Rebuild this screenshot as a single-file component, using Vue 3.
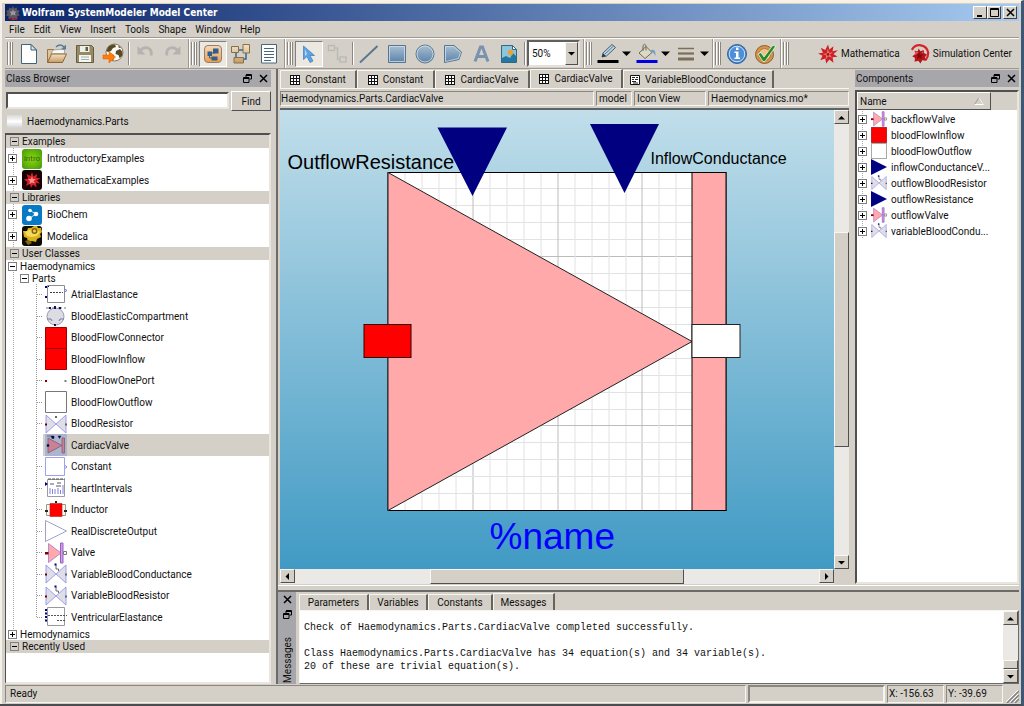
<script setup>
import { ref } from 'vue'

const menus = ['File', 'Edit', 'View', 'Insert', 'Tools', 'Shape', 'Window', 'Help']
const search = ref('')
const zoomLevel = ref('50%')

const examples = [
  { name: 'IntroductoryExamples', icon: 'intro' },
  { name: 'MathematicaExamples', icon: 'mathex' },
]
const libraries = [
  { name: 'BioChem', icon: 'biochem' },
  { name: 'Modelica', icon: 'modelica' },
]
const parts = [
  { name: 'AtrialElastance', icon: 'elastance' },
  { name: 'BloodElasticCompartment', icon: 'compartment' },
  { name: 'BloodFlowConnector', icon: 'redbox' },
  { name: 'BloodFlowInflow', icon: 'redbox' },
  { name: 'BloodFlowOnePort', icon: 'oneport' },
  { name: 'BloodFlowOutflow', icon: 'whitebox' },
  { name: 'BloodResistor', icon: 'resistor' },
  { name: 'CardiacValve', icon: 'cardiac', selected: true },
  { name: 'Constant', icon: 'constant' },
  { name: 'heartIntervals', icon: 'intervals' },
  { name: 'Inductor', icon: 'inductor' },
  { name: 'RealDiscreteOutput', icon: 'output' },
  { name: 'Valve', icon: 'valve' },
  { name: 'VariableBloodConductance', icon: 'varresistor' },
  { name: 'VariableBloodResistor', icon: 'varresistor' },
  { name: 'VentricularElastance', icon: 'ventricular' },
]
const docTabs = [
  { name: 'Constant', icon: 'grid', cls: 'w76' },
  { name: 'Constant', icon: 'grid', cls: 'w78' },
  { name: 'CardiacValve', icon: 'grid', cls: 'w95' },
  { name: 'CardiacValve', icon: 'grid', cls: 'w92', active: true },
  { name: 'VariableBloodConductance', icon: 'doc', cls: 'w150' },
]
const components = [
  { name: 'backflowValve', icon: 'valve' },
  { name: 'bloodFlowInflow', icon: 'redbox' },
  { name: 'bloodFlowOutflow', icon: 'whitebox' },
  { name: 'inflowConductanceV...', icon: 'input' },
  { name: 'outflowBloodResistor', icon: 'varresistor' },
  { name: 'outflowResistance', icon: 'input' },
  { name: 'outflowValve', icon: 'valve' },
  { name: 'variableBloodCondu...', icon: 'varresistor' },
]
const fileTools = ['new', 'open', 'save', 'web']
const editTools = ['undo', 'redo']
const shapeTools = ['line', 'rect', 'ellipse', 'polygon', 'text', 'image']
const gridLines = Array.from({ length: 19 }, (_, i) => i + 1)
const at = (start, i) => Math.round(start + i * 16.93)
</script>

<template>
  <div class="window">
    <svg class="defs" aria-hidden="true">
      <defs>
        <linearGradient id="blue" x1="0" y1="0" x2="0" y2="1"><stop offset="0" stop-color="#a9bfd3" /><stop offset="1" stop-color="#5b82a8" /></linearGradient>
        <linearGradient id="orange" x1="0" y1="0" x2="0" y2="1"><stop offset="0" stop-color="#fbd9b4" /><stop offset="1" stop-color="#ee9a4e" /></linearGradient>
        <linearGradient id="tan" x1="0" y1="0" x2="0" y2="1"><stop offset="0" stop-color="#f4e3c6" /><stop offset="1" stop-color="#c79b62" /></linearGradient>
      </defs>
      <symbol id="i-app" viewBox="0 0 14 14"><path d="M7 0l1.2 2.4 2.6-1 .2 2.7 2.7.7-1.4 2.3 1.4 2.3-2.6.8-.2 2.6-2.6-.8L7 14l-1.6-2-2.6.8-.2-2.6L0 9.4l1.4-2.3L0 4.8l2.8-.7.2-2.7 2.6 1z" fill="#5a5660" /><path d="M7 3.5l1 2 2.4 0-1.4 1.8.6 2.3L7 8.8l-2.5 1 .6-2.4L3.6 5.5l2.4 0z" fill="#9a97a0" /><path d="M2 11l3 2 4-.5 3-2-1 3-4 .5-4-1z" fill="#c22436" /></symbol>
      <symbol id="i-new" viewBox="0 0 22 22"><path d="M3.500 1.500h9.500l5.500 5.500v13.500h-15z" fill="#fff" stroke="#3f6478" /><path d="M13 1.500v5.500h5.500z" fill="#d7e6ee" stroke="#3f6478" /></symbol>
      <symbol id="i-open" viewBox="0 0 22 22"><path d="M1.500 19.500v-13h6l2 2h8v3" fill="#dfc49b" stroke="#9b7443" /><path d="M5 11l2-4 11-1 1 5z" fill="#f7f7f3" stroke="#888" stroke-width=".7" /><path d="M1.500 19.500l4-8.500h15l-4 8.500z" fill="url(#tan)" stroke="#8c6638" /><path d="M10 4q4-4 8 0" fill="none" stroke="#557d94" stroke-width="1.500" /><path d="M20 1.500v5h-5z" fill="#557d94" /></symbol>
      <symbol id="i-save" viewBox="0 0 22 22"><path d="M2.500 2.500h15l2 2v15h-17z" fill="#968964" stroke="#655d43" /><path d="M6 3h9.500v6H6z" fill="#e9efe9" /><path d="M11.500 4h2.500v4h-2.500z" fill="#655d43" /><path d="M5 12h12v7H5z" fill="#f6f6f0" /><path d="M7 14h8M7 16.500h8" stroke="#9fb0b0" /></symbol>
      <symbol id="i-web" viewBox="0 0 22 22"><circle cx="12.500" cy="9.500" r="8.500" fill="#fafaf3" stroke="#81765a" /><path d="M7 3q3-2 6-1.500l1 2.500-3 1-2 3-3 1-1.500-1q.5-3 2.500-5zM14 8l4-2 2.500 3-.5 4-2.500 2-1-3-3-1zM16 2.500l3 2-2 .5zM9 11l3 1 0 3-1 2.500-3-2z" fill="#57492a" /><path d="M1 12h6V8.500l6.500 5.500-6.500 6v-4H1z" fill="#ff7c0a" stroke="#d65f00" stroke-width=".5" /></symbol>
      <symbol id="i-undo" viewBox="0 0 22 22"><path d="M5.500 8.500q4-5 8.500-3.500 4.500 2 3 7.500" fill="none" stroke="#b4b3af" stroke-width="2.800" /><path d="M3.500 3v8.500h8z" fill="#b4b3af" /></symbol>
      <symbol id="i-redo" viewBox="0 0 22 22"><path d="M16.500 8.500q-4-5-8.500-3.500-4.500 2-3 7.500" fill="none" stroke="#b4b3af" stroke-width="2.800" /><path d="M18.500 3v8.500h-8z" fill="#b4b3af" /></symbol>
      <symbol id="i-iconview" viewBox="0 0 22 22"><rect x="2.500" y="2.500" width="17" height="17" rx="3.500" fill="url(#orange)" stroke="#8e8171" /><path d="M11 5.500h5.500v5H11zM5.500 8.500h4.500v4.500H5.500zM9.500 13.500h6v4h-6z" fill="#2e608d" /><path d="M7.500 13v2h3M10 10h3" stroke="#2e608d" fill="none" /></symbol>
      <symbol id="i-diagram" viewBox="0 0 22 22"><path d="M8 7h5M6 9v6M16 10v6h-3" stroke="#2f6891" fill="none" stroke-width="1.500" /><path d="M1.500 3.500h7v6h-7zM13 1.500h6.500v8.500H13zM4 14.500h9.500v5.500H4z" fill="url(#tan)" stroke="#866f4c" /></symbol>
      <symbol id="i-textview" viewBox="0 0 22 22"><path d="M3.500 1.500h15v18.500h-15z" fill="#fff" stroke="#47687b" /><path d="M6 5.500h10M6 8.500h10M6 11.500h10M6 14.500h10M6 17.500h7" stroke="#45667c" /></symbol>
      <symbol id="i-pointer" viewBox="0 0 22 22"><path d="M5.500 3l0 13.500 3.500-3 3 6 3-1.500-3-5.500h4.500z" fill="#5ba3e3" stroke="#3d7abb" stroke-width=".7" /><path d="M7 6v7l2-2z" fill="#b9dafa" /></symbol>
      <symbol id="i-connect" viewBox="0 0 22 22"><path d="M2.500 2.500h6v5h-6zM14 14h6v5h-6zM8.500 5h3v11.500H14" fill="none" stroke="#bcbab5" stroke-width="1.500" /></symbol>
      <symbol id="i-line" viewBox="0 0 22 22"><path d="M2 19.500L19.500 3" stroke="#58758e" stroke-width="1.800" /></symbol>
      <symbol id="i-rect" viewBox="0 0 22 22"><path d="M2.500 2.500h17v17h-17z" fill="url(#blue)" stroke="#57758f" /><path d="M3.500 3.500h15v15h-15z" fill="none" stroke="#d1dfea" stroke-width=".8" /></symbol>
      <symbol id="i-ellipse" viewBox="0 0 22 22"><circle cx="11" cy="11" r="9" fill="url(#blue)" stroke="#57758f" /><circle cx="11" cy="11" r="8" fill="none" stroke="#d1dfea" stroke-width=".8" /></symbol>
      <symbol id="i-polygon" viewBox="0 0 22 22"><path d="M2.500 2.500H12l7.500 6.500L17 16.500 2.500 19.500z" fill="url(#blue)" stroke="#57758f" /><path d="M3.500 3.500h8l7 6-2 6-13 3z" fill="none" stroke="#d1dfea" stroke-width=".8" /></symbol>
      <symbol id="i-text" viewBox="0 0 22 22"><path d="M5 18.500L10.500 4h2L18 18.500M7.500 13.500h8" fill="none" stroke="#7893ad" stroke-width="3" /></symbol>
      <symbol id="i-image" viewBox="0 0 22 22"><path d="M3.500 2.500h11l4 4v13h-15z" fill="#8cc5dd" stroke="#2f6884" /><path d="M4 15l4-2 4 2 3-5 3 3v6H4z" fill="#25779f" /><path d="M14.500 2.500v4h4z" fill="#fff" stroke="#2f6884" /><circle cx="12.500" cy="9.500" r="2.800" fill="#eaa233" /></symbol>
      <symbol id="i-pencil" viewBox="0 0 22 22"><path d="M5 14l1-4L15 1.500l3.500 3L9.500 13z" fill="#b9d5e4" stroke="#4c5862" /><path d="M5 14l1-3.500 3 2.500z" fill="#333" /><path d="M7.500 11.500l9-8.500" stroke="#527e9a" /><path d="M.500 17h21v3H.500z" fill="#000" /></symbol>
      <symbol id="i-fill" viewBox="0 0 22 22"><path d="M3 10l7-6.500 6 6-7 6z" fill="#ddd9c8" stroke="#716a55" /><path d="M7 8V2.500q1.500-2.500 3 0v5" fill="none" stroke="#6e684f" /><path d="M15 7q5-1.500 4.500 6-2-4-4-4z" fill="#6c9ecf" /><path d="M.500 17h21v3H.500z" fill="#0000e6" /></symbol>
      <symbol id="i-width" viewBox="0 0 22 22"><path d="M3 5.500h16" stroke="#7a7058" stroke-width="1.500" /><path d="M3 10.500h16" stroke="#7a7058" stroke-width="2.200" /><path d="M3 16h16" stroke="#7a7058" stroke-width="3" /></symbol>
      <symbol id="i-info" viewBox="0 0 22 22"><circle cx="11" cy="11" r="9.500" fill="#3c7bc7" stroke="#31669f" /><circle cx="11" cy="11" r="7.800" fill="#4e8fd8" stroke="#d3e3f5" /><path d="M10 4.500h2.500V7H10zM8.500 8.500h4v6H14V16H8.500v-1.500H10V10H8.500z" fill="#fff" /></symbol>
      <symbol id="i-check" viewBox="0 0 22 22"><circle cx="10.500" cy="11.500" r="9" fill="#d6944a" stroke="#8c5f2d" /><circle cx="10.500" cy="11.500" r="6" fill="#edc28d" stroke="#b4773a" /><path d="M4 11l3-1.500 3 4.500L19 2l2.500 1.500L11 18.500H9z" fill="#278c25" stroke="#fff" stroke-width=".7" /></symbol>
      <symbol id="i-spikey" viewBox="0 0 22 22"><path d="M11 .500l1.500 5.500 4.500-3.500-1 5.500 6-1-5 4 4.500 3-5.500.5 1 6-4.500-3.500L9 21.500l-1-5.500-5.500 2 2.500-5-5-2.500 5.500-1L3 4l5 2.500z" fill="#cc2026" /><path d="M11 5l1 4.500 4.500-.5-3.500 2.500 2.500 3.500-4.500-1.500L8.500 17l.5-4.500-4-1.500 4.500-.5z" fill="#f07a72" /><circle cx="11" cy="11.500" r="1.500" fill="#a80c18" /></symbol>
      <symbol id="i-simcenter" viewBox="0 0 22 22"><path d="M2 6.500Q5.500.500 12 1.500q7 1.500 8 8 0 5-3 8.500" fill="none" stroke="#d8232b" stroke-width="2.500" /><path d="M9.500 5l2 3 3.500-1.500.5 3.500 3 1.500-2 3 1 4-4-.5-2 3.500-2.500-3-4 1 .5-4-3-2 3.500-2.500-1-3.500 3.500.5z" fill="#b3161b" /><path d="M10.500 8.500l1 3 3 0-2 2 1 3-3-1.500-3 1.500 1-3-2-2.500h3z" fill="#8a090d" /><path d="M6 8l3 1-1 2-3 1zM13 8l2 1-1 2z" fill="#e5544f" /></symbol>
      <symbol id="i-grid" viewBox="0 0 10 10"><path d="M0 0h10v10H0z" fill="#111" /><path d="M1 1h2v2H1zM4 1h2v2H4zM7 1h2v2H7zM1 4h2v2H1zM4 4h2v2H4zM7 4h2v2H7zM1 7h2v2H1zM4 7h2v2H4zM7 7h2v2H7z" fill="#fff" /></symbol>
      <symbol id="i-doc" viewBox="0 0 10 10"><path d="M.500.500h9v9h-9z" fill="#fff" stroke="#111" /><path d="M2 2.500h3M6 2.500h2M2 4.500h2M5 4.500h3M2 6.500h4M3 8h5" stroke="#222" /></symbol>
      <symbol id="i-float" viewBox="0 0 9 9"><path d="M3 .500h5.500V5H6.500M3 1.500h5.500M3 1v2" fill="none" stroke="#000" /><path d="M.500 3.500h5.500V8.500H.500zM.500 4.500H6" fill="none" stroke="#000" /></symbol>
      <symbol id="i-close" viewBox="0 0 9 9"><path d="M1 1l7 7M8 1L1 8" stroke="#000" stroke-width="1.500" /></symbol>
      <symbol id="i-min" viewBox="0 0 9 9"><path d="M1 8h5" stroke="#000" stroke-width="2" /></symbol>
      <symbol id="i-max" viewBox="0 0 9 9"><path d="M.500.500h8v8h-8zM0 1.500h9" fill="none" stroke="#000" /></symbol>
      <symbol id="i-up" viewBox="0 0 7 7"><path d="M0 5.500h7L3.500 2z" /></symbol>
      <symbol id="i-down" viewBox="0 0 7 7"><path d="M0 2h7L3.500 5.500z" /></symbol>
      <symbol id="i-left" viewBox="0 0 7 7"><path d="M5 0v7L1.500 3.500z" /></symbol>
      <symbol id="i-right" viewBox="0 0 7 7"><path d="M2 0v7l3.500-3.500z" /></symbol>
      <symbol id="i-mathex" viewBox="0 0 20 20"><rect width="20" height="20" rx="3" fill="#160304" /><path d="M10 2l1.500 4.500L15 4l-.5 4 4 0-3.500 2.500 3 3-4-.5.5 4.500-3.500-3L9 18l-1-4-4 2 1.500-4L2 9.500l4-1L4.500 4 8.500 6z" fill="#d91f25" /><path d="M10 6l.8 3 3.200 0-2.500 2 1.500 2.500-3-1-2.500 1.500.5-3-2-2h3z" fill="#f79690" /></symbol>
      <symbol id="i-biochem" viewBox="0 0 20 20"><rect width="20" height="20" rx="3" fill="#0879c3" /><path d="M8 5.500l6 3.500-7 4.500" stroke="#c3e3f6" fill="none" /><circle cx="8" cy="5.500" r="1.800" fill="#fff" /><circle cx="14" cy="9" r="2.300" fill="#fff" /><circle cx="7" cy="13.500" r="2.800" fill="#fff" /></symbol>
      <symbol id="i-modelica" viewBox="0 0 20 20"><rect width="20" height="20" rx="3" fill="#0d0b05" /><path d="M1 5l4 0 1-3h3l3-2h3l1 2h3l1 4-2 2 1 3-4 2-1 3-4-1-4 1-1-4-3-1z" fill="#d9b21d" /><path d="M3 6l4-2 7-1 4 3-3 4-5 1-5-1z" fill="#f5dc5b" /><circle cx="12.500" cy="5" r="3" fill="#886009" /><circle cx="12.500" cy="5" r="1.500" fill="#efd252" /><path d="M3 15l4-1 3 3-4 2z" fill="#866812" /></symbol>
      <symbol id="i-elastance" viewBox="0 0 22 22"><path d="M2.500 1.500h17v17h-17z" fill="#fff" stroke="#8c8c92" /><path d="M5 8.500h13" stroke="#444" stroke-dasharray="2 1" /><path d="M0 2h2v2H0zM0 12h2v2H0zM3 2h1v1H3z" fill="#000080" /><path d="M19.500 5l2.500 1.500-2.500 1.500" stroke="#7777cc" fill="none" /></symbol>
      <symbol id="i-compartment" viewBox="0 0 22 22"><circle cx="10.500" cy="11.500" r="8.500" fill="#dcdce2" stroke="#9a9aab" /><path d="M1 3h20" stroke="#777788" stroke-dasharray="4 2" /><path d="M4 2h2v2H4zM9 1h2v3H9zM14 2h2v2h-2zM9 19h2v2H9z" fill="#101060" /><path d="M2 14h4l1 2M19 14h-4l-1 2" stroke="#7777aa" fill="none" /></symbol>
      <symbol id="i-redbox" viewBox="0 0 22 22"><path d="M.500.500h21v21h-21z" fill="#f00" stroke="#a00000" /></symbol>
      <symbol id="i-oneport" viewBox="0 0 22 22"><path d="M0 10h2v2H0z" fill="#800000" /><path d="M19.500 10h2v2h-2z" fill="#778" /></symbol>
      <symbol id="i-whitebox" viewBox="0 0 22 22"><path d="M.500.500h21v21h-21z" fill="#fff" stroke="#777" /></symbol>
      <symbol id="i-resistor" viewBox="0 0 22 22"><path d="M1 2l20 18V2L1 20z" fill="#dedee6" stroke="#8c8ce6" stroke-width=".8" /><path d="M0 10.500h2v2H0z" fill="#600" /><path d="M20 10.500h2v2h-2zM10 3h2v2h-2z" fill="#667" /></symbol>
      <symbol id="i-varresistor" viewBox="0 0 22 22"><path d="M1 2l20 18V2L1 20z" fill="#dedee6" stroke="#8c8ce6" stroke-width=".8" /><path d="M0 10.500h2v2H0z" fill="#600" /><path d="M20 10.500h2v2h-2z" fill="#667" /><path d="M9.500.500h2v2h-2z" fill="#000080" /><path d="M11 2v4h2.500v2" fill="none" stroke="#445" stroke-width=".8" /></symbol>
      <symbol id="i-cardiac" viewBox="0 0 22 22"><path d="M0 0h22v22H0z" fill="#abb6cc" /><path d="M3 4v15l14-7.500zM17 4h2.500v15H17z" fill="#c98295" stroke="#865577" stroke-width=".8" /><path d="M2 2h4M6 2h3v2.500H7zM13 2h3l-1.500 2.500zM2 10.500h2v2H2z" fill="#000060" stroke="#223" stroke-width=".5" /></symbol>
      <symbol id="i-constant" viewBox="0 0 22 22"><path d="M.500 1.500h19v18H.500z" fill="#fff" stroke="#a0a0f0" /><path d="M20 9.500l2 1.500-2 1.500" fill="none" stroke="#8888dd" /></symbol>
      <symbol id="i-intervals" viewBox="0 0 22 22"><path d="M2.500 2.500h17v17h-17z" fill="#fff" stroke="#9a9aa2" /><path d="M3 2h17" stroke="#555" stroke-dasharray="3 1" /><path d="M0 5l3 2-3 2z" fill="#000080" /><path d="M5 7h4M12 6h4M11 9h5" stroke="#557" /><path d="M5 11v6M7.500 12v5M10 12v5M13 11v6M15.500 13v4M18 8v9" stroke="#8080dd" /></symbol>
      <symbol id="i-inductor" viewBox="0 0 22 22"><path d="M1.500 5.500h19v11h-19z" fill="#f6f6ee" stroke="#9a9a88" /><path d="M5 4.500h12v13H5z" fill="#f00" stroke="#a22" stroke-width=".6" /><path d="M10 2h2v2h-2zM0 11h3v2H0zM19 11h3v2h-3z" fill="#302020" /></symbol>
      <symbol id="i-output" viewBox="0 0 22 22"><path d="M.500.500v21L21.500 11z" fill="#fff" stroke="#8888c8" stroke-width=".8" /></symbol>
      <symbol id="i-valve" viewBox="0 0 22 22"><path d="M3.500 1.500v19L16 11z" fill="#ffa9aa" stroke="#a07ad0" stroke-width=".8" /><path d="M15.500 1h2.500v20h-2.500z" fill="#e39ac8" stroke="#8a62d8" /><path d="M0 10h3.500v2.500H0z" fill="#800000" /><path d="M18.500 9.500h3v3h-3z" fill="#fff" stroke="#777" /></symbol>
      <symbol id="i-ventricular" viewBox="0 0 22 22"><path d="M2.500 1.500h17v18h-17z" fill="#fff" stroke="#999" /><path d="M3 9.500h19M12 14.500h9" stroke="#555" stroke-dasharray="2 1" /><path d="M0 3h2v2H0zM0 6.500h2v2H0zM0 10h2v2H0zM0 13.500h2v2H0z" fill="#000080" /></symbol>
      <symbol id="i-input" viewBox="0 0 22 22"><path d="M0 0v22l22-11z" fill="#000080" /></symbol>
    </svg>

    <header class="titlebar">
      <svg class="s14"><use href="#i-app" /></svg>
      <h1>Wolfram SystemModeler Model Center</h1>
      <button class="winbtn" aria-label="Minimize"><svg class="s9"><use href="#i-min" /></svg></button>
      <button class="winbtn" aria-label="Maximize"><svg class="s9"><use href="#i-max" /></svg></button>
      <button class="winbtn last" aria-label="Close"><svg class="s9"><use href="#i-close" /></svg></button>
    </header>

    <nav class="menubar">
      <button v-for="m in menus" :key="m">{{ m }}</button>
    </nav>

    <div class="toolbar">
      <div class="group">
        <i class="handle"></i>
        <button v-for="t in fileTools" :key="t" class="tool" :aria-label="t"><svg class="s22"><use :href="'#i-' + t" /></svg></button>
        <i class="sep"></i>
        <button v-for="t in editTools" :key="t" class="tool" :aria-label="t"><svg class="s22"><use :href="'#i-' + t" /></svg></button>
      </div>
      <div class="group">
        <i class="handle"></i>
        <button class="tool pressed" aria-label="Icon view"><svg class="s22"><use href="#i-iconview" /></svg></button>
        <button class="tool" aria-label="Diagram view"><svg class="s22"><use href="#i-diagram" /></svg></button>
        <button class="tool" aria-label="Text view"><svg class="s22"><use href="#i-textview" /></svg></button>
      </div>
      <div class="group">
        <i class="handle"></i>
        <button class="tool pressed" aria-label="Select"><svg class="s22"><use href="#i-pointer" /></svg></button>
        <button class="tool" aria-label="Connect"><svg class="s22"><use href="#i-connect" /></svg></button>
        <i class="sep"></i>
        <button v-for="t in shapeTools" :key="t" class="tool" :aria-label="t"><svg class="s22"><use :href="'#i-' + t" /></svg></button>
        <i class="sep"></i>
        <div class="combo">
          <select v-model="zoomLevel" aria-label="Zoom"><option>50%</option><option>100%</option></select>
          <span class="drop"><svg class="s7"><use href="#i-down" /></svg></span>
        </div>
      </div>
      <div class="group">
        <i class="handle"></i>
        <button v-for="t in ['pencil', 'fill', 'width']" :key="t" class="tool wide" :aria-label="t">
          <svg class="s22"><use :href="'#i-' + t" /></svg><svg class="s9"><use href="#i-down" /></svg>
        </button>
      </div>
      <div class="group">
        <i class="handle"></i>
        <button class="tool" aria-label="Information"><svg class="s22"><use href="#i-info" /></svg></button>
        <button class="tool" aria-label="Validate"><svg class="s22"><use href="#i-check" /></svg></button>
      </div>
      <div class="group apps">
        <i class="handle"></i>
        <button class="app"><svg class="s20"><use href="#i-spikey" /></svg>Mathematica</button>
        <button class="app"><svg class="s20"><use href="#i-simcenter" /></svg>Simulation Center</button>
      </div>
    </div>

    <main class="body">
      <aside class="left">
        <div class="docktitle">
          <span>Class Browser</span>
          <button aria-label="Float"><svg class="s9"><use href="#i-float" /></svg></button>
          <button aria-label="Close"><svg class="s9"><use href="#i-close" /></svg></button>
        </div>
        <div class="find">
          <input v-model="search" type="text" aria-label="Find class" />
          <button>Find</button>
        </div>
        <div class="current"><i></i>Haemodynamics.Parts</div>
        <div class="tree">
          <div class="head"><i class="toggle"></i>Examples</div>
          <div class="items">
            <div v-for="e in examples" :key="e.name" class="row"><i class="toggle plus"></i><b v-if="e.icon === 'intro'" class="intro">intro</b><svg v-else class="s20"><use :href="'#i-' + e.icon" /></svg><span>{{ e.name }}</span></div>
          </div>
          <div class="head"><i class="toggle"></i>Libraries</div>
          <div class="items">
            <div v-for="e in libraries" :key="e.name" class="row"><i class="toggle plus"></i><svg class="s20"><use :href="'#i-' + e.icon" /></svg><span>{{ e.name }}</span></div>
          </div>
          <div class="head"><i class="toggle"></i>User Classes</div>
          <div class="items">
            <div class="node"><i class="toggle"></i>Haemodynamics</div>
            <div class="node sub"><i class="toggle"></i>Parts</div>
            <div class="children">
              <div v-for="p in parts" :key="p.name" class="row" :class="{ selected: p.selected }"><svg class="s22"><use :href="'#i-' + p.icon" /></svg><span>{{ p.name }}</span></div>
            </div>
            <div class="node"><i class="toggle plus"></i>Hemodynamics</div>
          </div>
          <div class="head"><i class="toggle"></i>Recently Used</div>
        </div>
      </aside>

      <section class="work">
        <div class="upper">
          <div class="editor">
            <div class="doctabs">
              <button v-for="(t, i) in docTabs" :key="i" class="tab" :class="[t.cls, { active: t.active }]"><svg class="s10"><use :href="'#i-' + t.icon" /></svg>{{ t.name }}</button>
            </div>
            <div class="info">
              <span class="path">Haemodynamics.Parts.CardiacValve</span>
              <span class="kind">model</span>
              <span class="view">Icon View</span>
              <span class="file">Haemodynamics.mo*</span>
            </div>
            <div class="viewport">
              <div class="canvas">
                <svg viewBox="280 110 553 459" preserveAspectRatio="xMidYMid meet">
                  <rect x="388" y="172" width="338" height="338" fill="#fff" />
                  <g v-for="i in gridLines" :key="i" :stroke="i % 5 ? '#e2e2e2' : '#bcbcbc'">
                    <path :d="`M${at(387.5, i)}.5 172v338M388 ${at(171.5, i)}.5h338`" />
                  </g>
                  <rect x="387.5" y="172.500" width="338" height="338" fill="none" stroke="#000" />
                  <path d="M387.500 172.500v338L691.500 341.500z" fill="#ffa9aa" stroke="#222" />
                  <rect x="691.500" y="172.500" width="34" height="338" fill="#ffa9aa" stroke="#000" />
                  <rect x="363.500" y="324.500" width="47" height="33" fill="#f00" stroke="#300" />
                  <rect x="691.500" y="324.500" width="48" height="33" fill="#fff" stroke="#222" />
                  <path d="M437 127.500h69.500L472 196zM589.500 124h69L624 193z" fill="#000080" />
                  <text x="287" y="169" font-size="20" fill="#000">OutflowResistance</text>
                  <text x="650" y="164" font-size="16" fill="#000">InflowConductance</text>
                  <text x="489" y="549" font-size="37" fill="#0000ff">%name</text>
                </svg>
              </div>
              <div class="vbar">
                <button aria-label="Scroll up"><svg class="s7"><use href="#i-up" /></svg></button>
                <i class="gap-a"></i><i class="thumb"></i><i class="gap-b"></i>
                <button aria-label="Scroll down"><svg class="s7"><use href="#i-down" /></svg></button>
              </div>
              <div class="hbar">
                <button aria-label="Scroll left"><svg class="s7"><use href="#i-left" /></svg></button>
                <i class="gap-a"></i><i class="thumb"></i><i class="gap-b"></i>
                <button aria-label="Scroll right"><svg class="s7"><use href="#i-right" /></svg></button>
              </div>
            </div>
          </div>

          <aside class="right">
            <div class="docktitle">
              <span>Components</span>
              <button aria-label="Float"><svg class="s9"><use href="#i-float" /></svg></button>
              <button aria-label="Close"><svg class="s9"><use href="#i-close" /></svg></button>
            </div>
            <div class="list">
              <div class="listhead">
                <button>Name<svg viewBox="0 0 10 8"><path d="M.5 7.500L5 .5l4.500 7z" fill="none" stroke="#a09d97" /><path d="M5 .5l4.500 7H.5" fill="none" stroke="#fff" /></svg></button>
              </div>
              <div class="comps">
                <div v-for="c in components" :key="c.name" class="comp"><i class="toggle plus"></i><svg class="s16"><use :href="'#i-' + c.icon" /></svg><span>{{ c.name }}</span></div>
              </div>
            </div>
          </aside>
        </div>

        <div class="bottom">
          <div class="vtitle">
            <button aria-label="Close"><svg class="s9"><use href="#i-close" /></svg></button>
            <button aria-label="Float"><svg class="s9"><use href="#i-float" /></svg></button>
            <span>Messages</span>
          </div>
          <div class="msgpane">
            <div class="msgtabs">
              <button class="tab w70">Parameters</button>
              <button class="tab w59">Variables</button>
              <button class="tab w65">Constants</button>
              <button class="tab w62 active">Messages</button>
            </div>
            <div class="msgbody">
              <pre>Check of Haemodynamics.Parts.CardiacValve completed successfully.

Class Haemodynamics.Parts.CardiacValve has 34 equation(s) and 34 variable(s).
20 of these are trivial equation(s).</pre>
              <div class="vbar small">
                <button aria-label="Scroll up"><svg class="s7"><use href="#i-up" /></svg></button>
                <i class="gap-a"></i><i class="thumb"></i>
                <button aria-label="Scroll down"><svg class="s7"><use href="#i-down" /></svg></button>
              </div>
            </div>
          </div>
        </div>
      </section>
    </main>

    <footer class="status">
      <span class="ready">Ready</span>
      <span class="progress"></span>
      <span class="pos">X: -156.63</span>
      <span class="pos">Y: -39.69</span>
      <svg class="grip" viewBox="0 0 14 14"><path d="M2 14L14 2M6 14l8-8M10 14l4-4" stroke="#808080" stroke-width="1.500" /><path d="M1 13L13 1M5 13l8-8M9 13l4-4" stroke="#fff" /></svg>
    </footer>
  </div>
</template>

<style>
html,
body {
  margin: 0;
  background: #4a5a66;
}
</style>

<style scoped>
* {
  box-sizing: border-box;
}
.window {
  display: flex;
  flex-direction: column;
  height: 100vh;
  padding: 3px 2px 1px 5px;
  background: #d4d0c8;
  border-right: 3px solid #3d5876;
  border-bottom: 2px solid #4b4d50;
  border-top: 1px solid #fdf2de;
  box-shadow: inset 2px 2px 0 #f4f1ea;
  color: #111;
  font: 10px/13px Roboto, "DejaVu Sans Condensed", sans-serif;
  white-space: nowrap;
  overflow: hidden;
}
button,
input,
select {
  margin: 0;
  padding: 0;
  border: 0;
  background: none;
  color: inherit;
  font: inherit;
}
svg {
  display: block;
  flex: none;
}
.defs {
  position: absolute;
  width: 0;
  height: 0;
}
.s7 { width: 7px; height: 7px; }
.s9 { width: 9px; height: 9px; }
.s10 { width: 10px; height: 10px; }
.s14 { width: 14px; height: 14px; }
.s16 { width: 16px; height: 16px; }
.s20 { width: 20px; height: 20px; }
.s22 { width: 22px; height: 22px; }

.titlebar {
  display: flex;
  align-items: center;
  flex: none;
  height: 17px;
  padding: 0 2px 0 1px;
  background: linear-gradient(90deg, #0a246a, #a6caf0);
}
.titlebar h1 {
  flex: 1;
  margin: 0 0 0 2px;
  color: #fff;
  font: bold 10px/15px "DejaVu Sans Condensed", "DejaVu Sans", sans-serif;
}
.winbtn {
  display: flex;
  align-items: center;
  justify-content: center;
  width: 14px;
  height: 13px;
  background: #d4d0c8;
  border: 1px solid;
  border-color: #fff #404040 #404040 #fff;
}
.winbtn.last {
  margin-left: 2px;
}
.menubar {
  display: flex;
  flex: none;
  gap: 9px;
  height: 17px;
  padding: 0 4px;
  border-bottom: 1px solid #9c9890;
}
.toolbar {
  display: flex;
  flex: none;
  height: 31px;
  border-top: 1px solid #fff;
  border-bottom: 1px solid #9c9890;
}
.group {
  display: flex;
  align-items: center;
  padding-right: 1px;
  border-right: 1px solid #9c9890;
  box-shadow: 1px 0 0 #fff;
}
.group.apps {
  flex: 1;
  border: 0;
  box-shadow: none;
}
.handle {
  flex: none;
  width: 6px;
  height: 23px;
  margin: 0 2px;
  border: solid;
  border-width: 0 1px;
  border-color: #8b8780;
  background: linear-gradient(90deg, #fff 0 1px, #d4d0c8 1px 2px, #8b8780 2px 3px, #fff 3px 4px);
}
.sep {
  flex: none;
  width: 2px;
  height: 23px;
  margin: 0 1px;
  border-left: 1px solid #8b8780;
  border-right: 1px solid #fff;
}
.tool {
  display: flex;
  align-items: center;
  justify-content: center;
  width: 28px;
  height: 26px;
}
.tool.wide {
  width: 39px;
  gap: 3px;
}
.tool.pressed {
  background: #ebe8e2;
  border: 1px solid;
  border-color: #808080 #fff #fff #808080;
}
.combo {
  position: relative;
  width: 53px;
  height: 27px;
  margin-right: 2px;
  background: #fff;
  border: 2px solid;
  border-color: #606060 #e4e1da #e4e1da #606060;
}
.combo select {
  width: 100%;
  height: 100%;
  padding-left: 3px;
  appearance: none;
}
.drop {
  position: absolute;
  top: 0;
  right: 0;
  bottom: 0;
  display: flex;
  align-items: center;
  justify-content: center;
  width: 13px;
  pointer-events: none;
}
.drop,
.vbar button,
.hbar button,
.thumb {
  background: #d4d0c8;
  border: 1px solid;
  border-color: #f8f7f4 #505050 #505050 #f8f7f4;
}
.app {
  display: flex;
  align-items: center;
  gap: 3px;
}
.app:first-of-type {
  margin: 0 10px 0 auto;
}
.app:last-of-type {
  margin-right: 6px;
}

.body {
  display: flex;
  flex: 1;
  min-height: 0;
}
.left {
  display: flex;
  flex-direction: column;
  flex: none;
  width: 266px;
}
.docktitle {
  display: flex;
  align-items: center;
  flex: none;
  gap: 7px;
  height: 17px;
  margin-top: 1px;
  padding: 0 3px 0 1px;
  background: #a7a6aa;
}
.docktitle span {
  flex: 1;
}
.find {
  display: flex;
  gap: 2px;
  height: 22px;
  margin-top: 4px;
}
.find input {
  flex: 1;
  min-width: 0;
  height: 17px;
  margin: 1px 0 0 1px;
  padding: 0 3px;
  background: #fff;
  border: 2px solid;
  border-color: #505050 #e9e6df #e9e6df #505050;
}
.find button {
  width: 40px;
  height: 20px;
  border: 1px solid;
  border-color: #fff #505050 #505050 #fff;
}
.current {
  display: flex;
  align-items: center;
  gap: 5px;
  height: 20px;
  padding: 0 0 4px 2px;
}
.current i {
  width: 15px;
  height: 13px;
  background: linear-gradient(#d8d8d8, #fff, #d0d0d0);
}
.tree {
  flex: 1;
  min-height: 0;
  overflow: hidden;
  background: #fff;
  border: 2px solid;
  border-color: #505050 #e9e6df #e9e6df #505050;
  border-left-width: 1px;
}
.head {
  display: flex;
  align-items: center;
  gap: 3px;
  height: 13px;
  padding-left: 4px;
  background: #d4d0c8;
}
.toggle {
  flex: none;
  width: 9px;
  height: 9px;
  border: 1px solid #808080;
  background: linear-gradient(#000, #000) center / 5px 1px no-repeat;
}
.toggle.plus {
  background: linear-gradient(#000, #000) center / 5px 1px no-repeat, linear-gradient(#000, #000) center / 1px 5px no-repeat #fff;
}
.items {
  background: repeating-linear-gradient(#aaa 0 1px, #fff 1px 2px) 7px 0 / 1px 100% no-repeat;
}
.row {
  display: flex;
  align-items: center;
  gap: 5px;
  height: 21px;
  padding-left: 2px;
}
.row:nth-child(even) {
  height: 22px;
}
.intro {
  width: 20px;
  height: 20px;
  border-radius: 3px;
  background: radial-gradient(#8fd414, #3f9a08);
  color: #2b6808;
  font-size: 8px;
  font-weight: normal;
  line-height: 19px;
  text-align: center;
}
.node {
  display: flex;
  align-items: center;
  gap: 3px;
  height: 12px;
  padding-left: 2px;
}
.node .toggle {
  background-color: #fff;
}
.node.sub {
  padding-left: 14px;
}
.children {
  padding-left: 30px;
  background: repeating-linear-gradient(#999 0 1px, #fff 1px 2px) 30px 0 / 1px 97% no-repeat;
}
.children .row {
  gap: 4px;
  margin-left: 1px;
  padding-left: 0;
  background: repeating-linear-gradient(90deg, #999 0 1px, transparent 1px 2px) left center / 6px 1px no-repeat;
}
.children .row svg {
  margin-left: 8px;
}
.children .row.selected {
  background: linear-gradient(90deg, #fff 6px, #d4d0c8 6px);
}

.work {
  display: flex;
  flex-direction: column;
  flex: 1;
  min-width: 0;
  margin-left: 5px;
  border-left: 2px solid #6b6b6b;
}
.upper {
  display: flex;
  flex: 1;
  min-height: 0;
  padding-bottom: 1px;
  border-bottom: 1px solid #fff;
}
.editor {
  display: flex;
  flex-direction: column;
  flex: 1;
  min-width: 0;
  margin-left: 2px;
}
.doctabs {
  display: flex;
  align-items: flex-end;
  height: 19px;
}
.tab {
  display: flex;
  align-items: center;
  justify-content: center;
  gap: 5px;
  height: 18px;
  border: 1px solid #f7f5f0;
  border-right: 2px solid #66645f;
  border-bottom: 0;
}
.doctabs .tab.active {
  height: 19px;
  padding-bottom: 1px;
}
.w59 { width: 59px; }
.w62 { width: 62px; }
.w65 { width: 65px; }
.w70 { width: 70px; }
.w76 { width: 77px; }
.w78 { width: 78px; }
.w95 { width: 95px; }
.w92 { width: 93px; }
.w150 { width: 151px; }
.info {
  display: flex;
  align-items: center;
  gap: 2px;
  height: 20px;
  border-top: 1px solid #f7f5f0;
}
.info span,
.status span {
  border: 1px solid;
  border-color: #8b8780 #f7f5f0 #f7f5f0 #8b8780;
}
.info span {
  height: 15px;
  padding-left: 2px;
}
.info .path { flex: 1; padding: 0; }
.info .kind { width: 36px; }
.info .view { width: 72px; }
.info .file { width: 141px; }
.viewport {
  display: grid;
  grid-template-columns: minmax(0, 1fr) 15px;
  grid-template-rows: minmax(0, 1fr) 15px;
  flex: 1;
  min-height: 0;
  border-top: 2px solid #5d6468;
}
.canvas {
  background: linear-gradient(#c1deea, #409ac4);
}
.canvas svg {
  width: 100%;
  height: 100%;
  font-family: "Liberation Sans", Arial, sans-serif;
}
.vbar,
.hbar {
  display: flex;
  background: #ebe9e5;
}
.vbar {
  flex-direction: column;
}
.vbar button,
.hbar button {
  display: flex;
  align-items: center;
  justify-content: center;
  flex: none;
  width: 15px;
  height: 14px;
}
.vbar .gap-a { flex: 109; }
.vbar .thumb { flex: 214; }
.vbar .gap-b { flex: 109; }
.hbar .gap-a { flex: 136; }
.hbar .thumb { flex: 252; }
.hbar .gap-b { flex: 136; }
.vbar.small .gap-a { flex: 37; }
.vbar.small .thumb { flex: 8; }

.right {
  display: flex;
  flex-direction: column;
  flex: none;
  width: 164px;
  margin-left: 6px;
}
.list {
  flex: 1;
  margin-top: 3px;
  background: #fff;
  border: 2px solid #e9e6df;
  border-top-color: #505050;
  border-left-color: #505050;
}
.listhead {
  height: 18px;
  background: #d4d0c8;
}
.listhead button {
  display: flex;
  align-items: center;
  justify-content: space-between;
  width: 134px;
  height: 18px;
  padding: 0 6px 0 2px;
  border: 1px solid;
  border-color: #fff #505050 #505050 #fff;
}
.listhead svg {
  width: 10px;
  height: 8px;
}
.comps {
  margin-top: 1px;
  background: repeating-linear-gradient(#aaa 0 1px, #fff 1px 2px) 5px 0 / 1px 128px no-repeat;
}
.comp {
  display: flex;
  align-items: center;
  gap: 4px;
  height: 16px;
  padding-left: 1px;
}

.bottom {
  display: flex;
  flex: none;
  height: 94px;
  margin-top: 4px;
  border-top: 2px solid #6b6b6b;
}
.vtitle {
  display: flex;
  flex-direction: column;
  align-items: center;
  gap: 6px;
  width: 18px;
  padding: 3px 0 0;
  background: #a7a6aa;
}
.vtitle button {
  height: 9px;
}
.vtitle span {
  margin: auto 0 1px;
  writing-mode: vertical-rl;
  transform: rotate(180deg);
}
.msgpane {
  display: flex;
  flex-direction: column;
  flex: 1;
  min-width: 0;
  margin-left: 3px;
}
.msgtabs {
  display: flex;
  align-items: flex-end;
  height: 18px;
}
.msgtabs .tab {
  height: 16px;
}
.msgtabs .tab.active {
  height: 17px;
}
.msgbody {
  display: flex;
  flex: 1;
  min-height: 0;
  background: #fff;
  border: 1px solid #6b6b6b;
  border-top-color: #f7f5f0;
  border-left-color: #f7f5f0;
}
.msgbody pre {
  flex: 1;
  margin: 0;
  padding: 10px 4px;
  font: 10px/13px "Liberation Mono", "Courier New", monospace;
}
.status {
  display: flex;
  flex: none;
  gap: 2px;
  height: 18px;
  margin-top: 1px;
}
.status span {
  line-height: 16px;
}
.status .ready {
  flex: 1;
  padding-left: 4px;
}
.status .progress {
  width: 137px;
  border-width: 2px;
}
.status .pos {
  width: 57px;
  padding-left: 1px;
}
.grip {
  width: 14px;
  height: 14px;
  align-self: flex-end;
}
</style>
